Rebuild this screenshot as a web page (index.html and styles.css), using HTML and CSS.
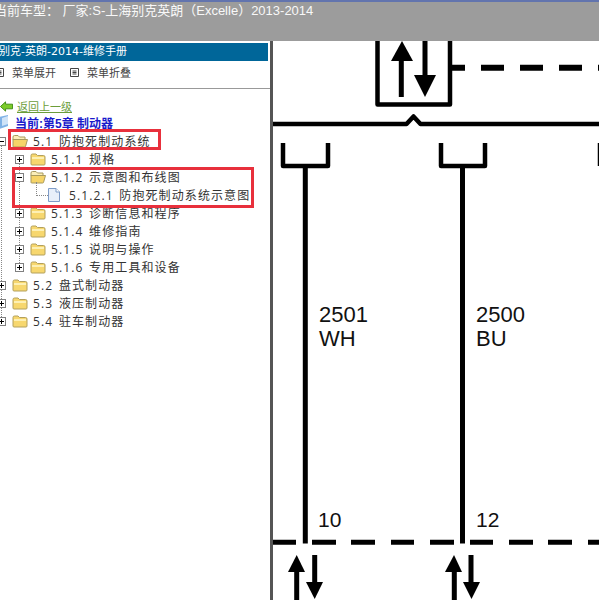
FILE: index.html
```html
<!DOCTYPE html>
<html lang="zh">
<head>
<meta charset="utf-8">
<title>维修手册</title>
<link rel="stylesheet" href="styles.css">
</head>
<body>
<svg class="defs" width="0" height="0" aria-hidden="true">
  <symbol id="folder" viewBox="0 0 16 14">
    <path d="M1 3.500Q1 2 2.500 2H6L7.500 3.500H13.500Q15 3.500 15 5V12Q15 13 14 13H2Q1 13 1 12Z" fill="#f7d76e" stroke="#b3a05c"/>
    <path d="M2 5H14V7H2Z" fill="#fdf0b4"/>
  </symbol>
  <symbol id="folder-open" viewBox="0 0 16 14">
    <path d="M1 3Q1 1.500 2.500 1.500H6L7.500 3H13V6H1Z" fill="#fbeeb8" stroke="#a89a5e"/>
    <path d="M1 12.500V5.500H4L15.500 5.500L13.500 12.500Q13.300 13 12.500 13H2Q1 13 1 12.500Z" fill="#f6d468" stroke="#a89a5e"/>
  </symbol>
</svg>
<header class="topbar">
  <div class="topbar-text">当前车型： 厂家:S-上海别克英朗（Excelle）2013-2014</div>
</header>
<main class="main">
  <aside class="sidebar">
    <h1 class="manual-title">别克-英朗-2014-维修手册</h1>
    <div class="toolbar">
      <span class="tool"><svg class="tool-icon" viewBox="0 0 9 9"><path d="M.5.500H8.500V8.500H.5ZM2.500 3H6.500M2.500 4.500H6.500M2.500 6H6.500" fill="none" stroke="#444"/></svg>菜单展开</span>
      <span class="tool"><svg class="tool-icon" viewBox="0 0 9 9"><path d="M.5.500H8.500V8.500H.5ZM2.500 3H6.500M2.500 4.500H6.500M2.500 6H6.500" fill="none" stroke="#444"/></svg>菜单折叠</span>
    </div>
    <a class="back-link" href="#">
      <svg class="back-icon" viewBox="0 0 14 11"><path d="M.5 5.500L6 .5V3H13.500V8H6V10.500Z" fill="#7ccc2a" stroke="#3d8a12"/></svg>
      <span>返回上一级</span>
    </a>
    <div class="current">
      <svg class="book-icon" viewBox="0 0 10 14"><path d="M0 2L9 0V11L0 14Z" fill="#7fb2e6"/><path d="M3 3L9 1V9L3 11Z" fill="#cfe3f7"/></svg>
      <span>当前:第5章 制动器</span>
    </div>
    <div class="tree">
      <div class="row"><span class="twist minus"></span><svg class="folder"><use href="#folder-open"/></svg><span class="label">5.1 防抱死制动系统</span></div>
      <div class="group">
        <div class="row"><span class="twist plus"></span><svg class="folder"><use href="#folder"/></svg><span class="label">5.1.1 规格</span></div>
        <div class="row"><span class="twist minus"></span><svg class="folder"><use href="#folder-open"/></svg><span class="label">5.1.2 示意图和布线图</span></div>
        <div class="row leaf"><svg class="page" viewBox="0 0 12 14"><path d="M.5.500H8L11.500 4V13.500H.5Z" fill="#e8effa" stroke="#7f9cc8"/><path d="M8 .5V4H11.500" fill="#fff" stroke="#7f9cc8"/></svg><span class="label">5.1.2.1 防抱死制动系统示意图</span></div>
        <div class="row"><span class="twist plus"></span><svg class="folder"><use href="#folder"/></svg><span class="label">5.1.3 诊断信息和程序</span></div>
        <div class="row"><span class="twist plus"></span><svg class="folder"><use href="#folder"/></svg><span class="label">5.1.4 维修指南</span></div>
        <div class="row"><span class="twist plus"></span><svg class="folder"><use href="#folder"/></svg><span class="label">5.1.5 说明与操作</span></div>
        <div class="row"><span class="twist plus"></span><svg class="folder"><use href="#folder"/></svg><span class="label">5.1.6 专用工具和设备</span></div>
      </div>
      <div class="row"><span class="twist plus"></span><svg class="folder"><use href="#folder"/></svg><span class="label">5.2 盘式制动器</span></div>
      <div class="row"><span class="twist plus"></span><svg class="folder"><use href="#folder"/></svg><span class="label">5.3 液压制动器</span></div>
      <div class="row"><span class="twist plus"></span><svg class="folder"><use href="#folder"/></svg><span class="label">5.4 驻车制动器</span></div>
    </div>
    <div class="mark mark-a"></div>
    <div class="mark mark-b"></div>
  </aside>
  <section class="diagram-pane">
    <svg class="diagram" viewBox="273 41 326 559">
      <g class="line">
        <path class="w4" d="M377.500 41V104.500H450V41"/>
        <path class="w5" d="M401.300 97V58M425 41V78"/>
        <path class="w4" d="M273 124H406.500L413.500 116.500L420.500 124H599"/>
        <path class="w4" d="M283 143V166H328V143M441 143V166H485V143M600 143V166"/>
        <path class="w5" d="M305.300 166V543.500M462.500 166V543.500"/>
        <path class="w6" d="M452 67.700H465M481 67.700H504M520 67.700H543M559 67.700H582M598 67.700H599"/>
        <path class="w5" d="M273 542.300H296M312 542.300H336M351 542.300H375M391 542.300H414M430 542.300H454M470 542.300H493M509 542.300H533M548 542.300H572M588 542.300H599"/>
        <path class="w5" d="M296.700 568V600M314.700 555V585M454.300 568V600M471 555V585"/>
      </g>
      <g class="head">
        <path d="M391 61L402 41L413 61Z"/>
        <path d="M414 75L425 97L436 75Z"/>
        <path d="M288 572L296.700 555L305 572Z"/>
        <path d="M306 582L314.700 599L323 582Z"/>
        <path d="M445 572L454 555L462 572Z"/>
        <path d="M463 582L471.500 599L480 582Z"/>
      </g>
      <text class="t22" x="319" y="321.700">2501</text>
      <text class="t22" x="319" y="345.700">WH</text>
      <text class="t22" x="476" y="321.700">2500</text>
      <text class="t22" x="476" y="345.700">BU</text>
      <text class="t21" x="318" y="527">10</text>
      <text class="t21" x="476" y="527">12</text>
    </svg>
  </section>
</main>
</body>
</html>
```
FILE: styles.css
```css
* { box-sizing: border-box; }
html, body { margin: 0; padding: 0; height: 600px; overflow: hidden; background: #fff; }
body { display: flex; flex-direction: column; font-family: "Liberation Sans", "Noto Sans CJK SC", sans-serif; }
.defs { position: absolute; }

.topbar { height: 41px; flex: none; background: #9c9c9c; border-top: 2px solid #6274ae; overflow: hidden; }
.topbar-text { width: 330px; margin-left: -6px; height: 17px; line-height: 17px; font-size: 13px; color: #f8f8f8; white-space: nowrap; }

.main { flex: 1; display: flex; min-height: 0; }
.sidebar { position: relative; width: 273px; flex: none; padding-top: 2px; border-right: 3px solid #555; overflow: hidden; }

.manual-title { margin: 0 2px 0 0; height: 18px; text-indent: -1px; line-height: 18px; font-family: "DejaVu Sans", "Noto Sans CJK SC", sans-serif; font-size: 11px; font-weight: normal; color: #fff; background: #006699; white-space: nowrap; }

.toolbar { display: flex; align-items: center; gap: 14px; height: 28px; margin-left: -5px; padding-bottom: 5px; border-bottom: 1px solid #999; font-size: 11px; color: #444; }
.tool { display: flex; align-items: center; gap: 8px; }
.tool-icon { width: 9px; height: 9px; flex: none; }

.back-link { display: flex; align-items: center; gap: 4px; height: 16px; margin-top: 9px; font-size: 11px; color: #6b9d3a; }
.back-link span { text-decoration: underline; }
.back-icon { width: 13px; height: 11px; flex: none; }

.current { display: flex; align-items: center; gap: 6px; height: 16px; margin-left: -1px; font-size: 12px; font-weight: bold; color: #1a1acb; white-space: nowrap; }
.book-icon { width: 10px; height: 14px; flex: none; }

.tree { position: relative; margin: 2px 0 0 -3px; font-family: "Open Sans", "Noto Sans CJK SC", sans-serif; font-size: 12px; color: #333; }
.tree::before, .group::before { content: ""; position: absolute; left: 4px; top: 9px; bottom: 9px; border-left: 1px dotted #888; }
.group { position: relative; margin-left: 18px; }
.row { position: relative; display: flex; align-items: center; height: 18px; white-space: nowrap; }

.twist { position: relative; width: 9px; height: 9px; flex: none; border: 1px solid #808080; background: #fff; margin-right: 6px; }
.twist::before { content: ""; position: absolute; left: 1px; top: 3px; width: 5px; height: 1px; background: #000; }
.plus::after { content: ""; position: absolute; left: 3px; top: 1px; width: 1px; height: 5px; background: #000; }
.folder { width: 16px; height: 14px; flex: none; margin-right: 5px; }
.label { letter-spacing: 1.1px; word-spacing: 1.5px; }

.leaf { padding-left: 33px; }
.leaf::before { content: ""; position: absolute; left: 21px; top: -4px; width: 11px; height: 13px; border-left: 1px dotted #888; border-bottom: 1px dotted #888; }
.page { width: 12px; height: 14px; flex: none; margin-right: 9px; }

.mark { position: absolute; border: 3px solid #e8303c; pointer-events: none; }
.mark-a { left: 8px; top: 88px; width: 153px; height: 21px; }
.mark-b { left: 12px; top: 126px; width: 242px; height: 41px; }

.diagram-pane { flex: 1; min-width: 0; }
.diagram { display: block; width: 326px; height: 559px; }
.line { fill: none; stroke: #000; stroke-linejoin: round; }
.w4 { stroke-width: 4.5px; }
.w5 { stroke-width: 5px; }
.w6 { stroke-width: 6px; }
.head { fill: #000; }
.t22 { font-family: "Liberation Sans", sans-serif; font-size: 22px; fill: #111; }
.t21 { font-family: "Liberation Sans", sans-serif; font-size: 21px; fill: #111; }
```
